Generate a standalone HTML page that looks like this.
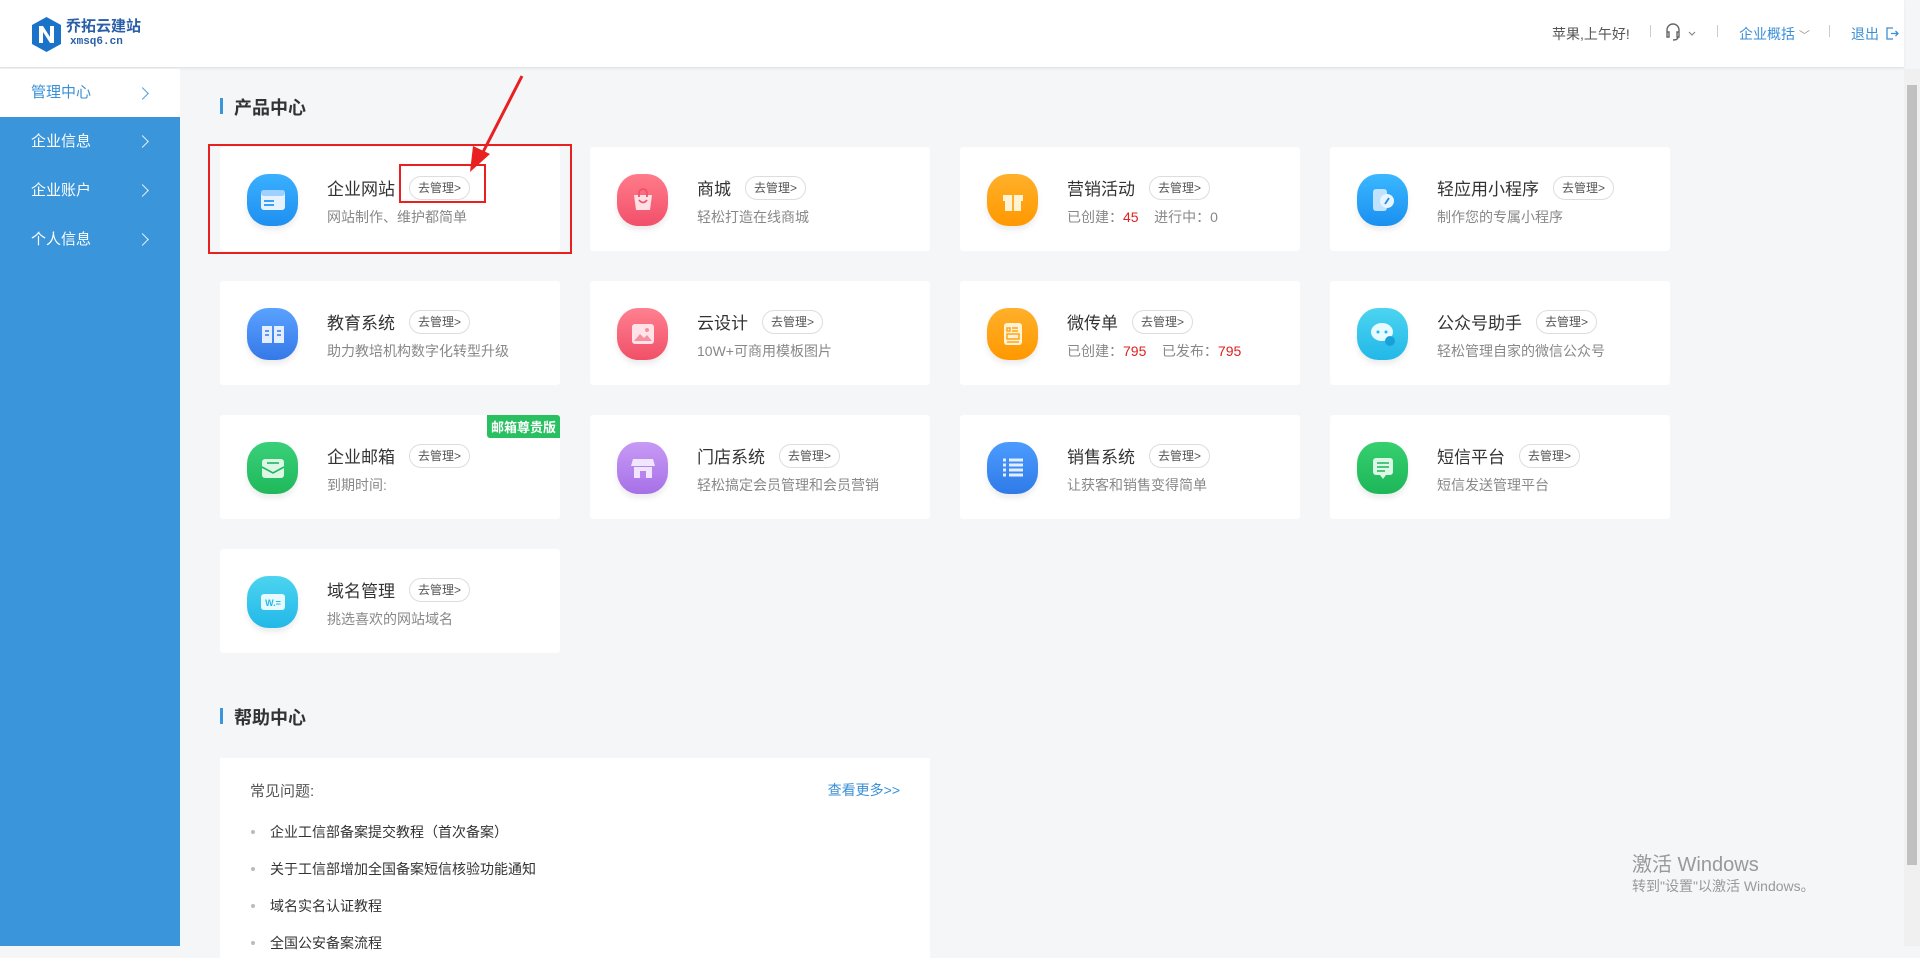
<!DOCTYPE html>
<html><head><meta charset="utf-8">
<style>
*{margin:0;padding:0;box-sizing:border-box}
body{width:1920px;height:946px;overflow:hidden;background:#f5f6f8;font-family:"Liberation Sans","Noto Sans CJK SC",sans-serif;position:relative;color:#333}
.hdr{position:absolute;left:0;top:0;width:1904px;height:68px;background:#fff;border-bottom:1px solid #e2e4e8;box-shadow:0 1px 3px rgba(0,0,0,.06)}
.side{position:absolute;left:0;top:69px;width:180px;height:877px;background:#3a95db}
.side .it{height:49px;line-height:49px;padding-left:31px;color:#fff;font-size:15px;position:relative}
.side .it.on{background:#fff;color:#3a8fd6;height:48px;line-height:48px}
.side .it:after{content:"";position:absolute;left:138px;top:20px;width:8px;height:8px;border-right:1.3px solid currentColor;border-top:1.3px solid currentColor;transform:rotate(45deg);opacity:.85}
.sec{position:absolute;font-size:18px;font-weight:bold;color:#333;padding-left:14px}
.sec:before{content:"";position:absolute;left:0;top:4px;width:3px;height:16px;background:#3a95db}
.card{position:absolute;width:340px;height:104px;background:#fff;border-radius:3px}
.ic{position:absolute;left:27px;top:27px;width:51px;height:52px;border-radius:42%;box-shadow:0 4px 6px rgba(0,0,0,.08)}
.ic svg{position:absolute;left:13px;top:13px}
.t{position:absolute;left:107px;top:28px;font-size:17px;color:#333;white-space:nowrap;display:flex;align-items:center}
.b{display:inline-block;margin-left:14px;height:24px;line-height:22px;padding:0 8px;border:1px solid #ddd;border-radius:12px;font-size:12px;color:#555}
.s{position:absolute;left:107px;top:60px;font-size:14px;color:#888;white-space:nowrap}
.s i{font-style:normal;color:#e02020}
.help{position:absolute;left:220px;top:758px;width:710px;height:200px;background:#fff}
.help li{list-style:none;position:absolute;left:50px;font-size:14px;color:#333}
.help li:before{content:"";position:absolute;left:-19px;top:8px;width:4px;height:4px;border-radius:50%;background:#bbb}
</style></head><body>
<div class="hdr">
  <svg style="position:absolute;left:30px;top:16px" width="33" height="37" viewBox="0 0 33 37"><path d="M16.5 1L31 9v19L16.5 36 2 28V9z" fill="#1a72c9"/><path d="M9 27V10h4l7 11V10h4v17h-4l-7-11v11z" fill="#fff"/></svg>
  <div style="position:absolute;left:66px;top:15px;font-size:15px;font-weight:bold;color:#2a5fa8">乔拓云建站</div>
  <div style="position:absolute;left:70px;top:36px;font-size:11px;font-weight:bold;color:#2a5fa8;font-family:'Liberation Mono',monospace">xmsq6.cn</div>
  <div style="position:absolute;left:1552px;top:24px;font-size:14px;color:#555">苹果,上午好!</div>
  <div style="position:absolute;left:1650px;top:25px;width:1px;height:12px;background:#ccc"></div>
  <svg style="position:absolute;left:1665px;top:22px" width="36" height="20" viewBox="0 0 36 20"><path d="M2 11V8a6 6 0 0 1 12 0v3M2 10h2v5H2zM12 10h2v5h-2zM13 15q0 3-5 3" fill="none" stroke="#666" stroke-width="1.4"/><path d="M24 10l3 3 3-3" fill="none" stroke="#888" stroke-width="1.2"/></svg>
  <div style="position:absolute;left:1717px;top:25px;width:1px;height:12px;background:#ccc"></div>
  <div style="position:absolute;left:1739px;top:24px;font-size:14px;color:#3a8fd6">企业概括 <span style="font-size:11px;color:#999">﹀</span></div>
  <div style="position:absolute;left:1829px;top:25px;width:1px;height:12px;background:#ccc"></div>
  <div style="position:absolute;left:1851px;top:24px;font-size:14px;color:#3a8fd6">退出</div>
  <svg style="position:absolute;left:1886px;top:27px" width="13" height="13" viewBox="0 0 13 13"><path d="M7 1H1v11h6M5 6.5h7M9.5 4l2.5 2.5L9.5 9" fill="none" stroke="#3a8fd6" stroke-width="1.3"/></svg>
</div>
<div style="position:absolute;left:1904px;top:69px;width:16px;height:877px;background:#f0f0f0"><div style="position:absolute;left:3px;top:16px;width:10px;height:780px;background:#c1c1c1"></div></div>
<div class="side">
  <div class="it on">管理中心</div><div class="it">企业信息</div><div class="it">企业账户</div><div class="it">个人信息</div>
</div>
<div class="sec" style="left:220px;top:94px">产品中心</div>

<div class="card" style="left:220px;top:147px"><div class="ic" style="background:linear-gradient(#3ab0ff,#1e8ff0)"><svg width="26" height="26"><rect x="1" y="3" width="24" height="20" rx="3" fill="#e6f3ff"/><rect x="1" y="3" width="24" height="6" rx="3" fill="#9fd0ff"/><rect x="4" y="13" width="10" height="2" fill="#3aa0f5"/><rect x="4" y="17" width="10" height="2" fill="#3aa0f5"/></svg></div><div class="t">企业网站<span class="b">去管理&gt;</span></div><div class="s">网站制作、维护都简单</div></div>
<div class="card" style="left:590px;top:147px"><div class="ic" style="background:linear-gradient(#ff7b8a,#f2506a)"><svg width="26" height="26"><path d="M4 8h18l-2 15H6z" fill="#ffe0e5"/><path d="M9 10V6a4 4 0 0 1 8 0v4M9 13q4 5 8 0" fill="none" stroke="#f2506a" stroke-width="1.8"/></svg></div><div class="t">商城<span class="b">去管理&gt;</span></div><div class="s">轻松打造在线商城</div></div>
<div class="card" style="left:960px;top:147px"><div class="ic" style="background:linear-gradient(#ffb02a,#ff9800)"><svg width="26" height="26"><rect x="3" y="8" width="20" height="6" fill="#fff3d6"/><rect x="5" y="14" width="16" height="10" fill="#fff3d6"/><rect x="12" y="8" width="2" height="16" fill="#ffb02a"/></svg></div><div class="t">营销活动<span class="b">去管理&gt;</span></div><div class="s">已创建：<i>45</i>&nbsp;&nbsp;&nbsp;&nbsp;进行中：0</div></div>
<div class="card" style="left:1330px;top:147px"><div class="ic" style="background:linear-gradient(#3ab8ff,#1a8ff0)"><svg width="26" height="26"><rect x="3" y="2" width="14" height="22" rx="3" fill="#bfe2ff"/><circle cx="17" cy="14" r="7" fill="#e8f5ff"/><path d="M15 17l4-6" stroke="#1a8ff0" stroke-width="1.8"/></svg></div><div class="t">轻应用小程序<span class="b">去管理&gt;</span></div><div class="s">制作您的专属小程序</div></div>

<div class="card" style="left:220px;top:281px"><div class="ic" style="background:linear-gradient(#5aa2ff,#3578e8)"><svg width="26" height="26"><path d="M2 5h10v17H2zM14 5h10v17H14z" fill="#e3eeff"/><path d="M5 10h4M5 14h4M17 10h4M17 14h4" stroke="#3578e8" stroke-width="1.6"/></svg></div><div class="t">教育系统<span class="b">去管理&gt;</span></div><div class="s">助力教培机构数字化转型升级</div></div>
<div class="card" style="left:590px;top:281px"><div class="ic" style="background:linear-gradient(#ff8090,#f05068)"><svg width="26" height="26"><rect x="2" y="3" width="22" height="20" rx="3" fill="#ffe3e8"/><path d="M4 20l6-7 4 4 3-3 5 6z" fill="#f7909e"/><circle cx="17" cy="9" r="2" fill="#f7909e"/></svg></div><div class="t">云设计<span class="b">去管理&gt;</span></div><div class="s">10W+可商用模板图片</div></div>
<div class="card" style="left:960px;top:281px"><div class="ic" style="background:linear-gradient(#ffb02a,#ff9800)"><svg width="26" height="26"><rect x="4" y="2" width="18" height="22" rx="3" fill="#fff3d6"/><path d="M7 7h3v3H7zM12 7h6M12 10h6M7 13h12v5H7zM7 21h12" stroke="#ffa516" stroke-width="1.5" fill="none"/></svg></div><div class="t">微传单<span class="b">去管理&gt;</span></div><div class="s">已创建：<i>795</i>&nbsp;&nbsp;&nbsp;&nbsp;已发布：<i>795</i></div></div>
<div class="card" style="left:1330px;top:281px"><div class="ic" style="background:linear-gradient(#4cd4f0,#22b8e8)"><svg width="26" height="26"><ellipse cx="12" cy="11" rx="11" ry="9" fill="#e6faff"/><circle cx="8" cy="11" r="1.5" fill="#22b8e8"/><circle cx="16" cy="11" r="1.5" fill="#22b8e8"/><circle cx="20" cy="20" r="5" fill="#1aa0d8"/></svg></div><div class="t">公众号助手<span class="b">去管理&gt;</span></div><div class="s">轻松管理自家的微信公众号</div></div>

<div class="card" style="left:220px;top:415px"><div style="position:absolute;right:0;top:0;background:#28c060;color:#fff;font-size:13px;font-weight:bold;padding:2px 4px;border-radius:0 3px 0 3px">邮箱尊贵版</div><div class="ic" style="background:linear-gradient(#3ad07a,#1fb85a)"><svg width="26" height="26"><rect x="2" y="4" width="22" height="19" rx="3" fill="#dcf7e6"/><path d="M2 12l11 6 11-6" fill="none" stroke="#1fb85a" stroke-width="1.6"/><path d="M7 8h12" stroke="#1fb85a" stroke-width="1.6"/></svg></div><div class="t">企业邮箱<span class="b">去管理&gt;</span></div><div class="s">到期时间:</div></div>
<div class="card" style="left:590px;top:415px"><div class="ic" style="background:linear-gradient(#c79af5,#a770e8)"><svg width="26" height="26"><path d="M3 4h20l2 7H1z" fill="#f1e6ff"/><rect x="4" y="12" width="18" height="11" fill="#f1e6ff"/><rect x="10" y="16" width="6" height="7" fill="#b884ee"/></svg></div><div class="t">门店系统<span class="b">去管理&gt;</span></div><div class="s">轻松搞定会员管理和会员营销</div></div>
<div class="card" style="left:960px;top:415px"><div class="ic" style="background:linear-gradient(#4c9cff,#2f7ae8)"><svg width="26" height="26"><path d="M3 5h3M3 10h3M3 15h3M3 20h3M9 5h14M9 10h14M9 15h14M9 20h14" stroke="#e3eeff" stroke-width="3"/></svg></div><div class="t">销售系统<span class="b">去管理&gt;</span></div><div class="s">让获客和销售变得简单</div></div>
<div class="card" style="left:1330px;top:415px"><div class="ic" style="background:linear-gradient(#36d070,#1db658)"><svg width="26" height="26"><rect x="3" y="3" width="20" height="17" rx="3" fill="#dcf7e6"/><path d="M10 20l3 4 3-4z" fill="#dcf7e6"/><path d="M7 8h12M7 12h12M7 16h8" stroke="#1db658" stroke-width="1.6"/></svg></div><div class="t">短信平台<span class="b">去管理&gt;</span></div><div class="s">短信发送管理平台</div></div>

<div class="card" style="left:220px;top:549px"><div class="ic" style="background:linear-gradient(#4cd4f0,#22b8e8)"><svg width="26" height="26"><rect x="1" y="5" width="24" height="16" rx="3" fill="#e6faff"/><text x="13" y="17" text-anchor="middle" font-size="9" font-weight="bold" fill="#22b8e8" font-family="Liberation Sans">W.=</text></svg></div><div class="t">域名管理<span class="b">去管理&gt;</span></div><div class="s">挑选喜欢的网站域名</div></div>

<div class="sec" style="left:220px;top:704px">帮助中心</div>
<div class="help">
  <div style="position:absolute;left:30px;top:22px;font-size:15px;color:#555">常见问题:</div>
  <div style="position:absolute;right:30px;top:22px;font-size:14px;color:#3a8fd6">查看更多&gt;&gt;</div>
  <li style="top:64px">企业工信部备案提交教程（首次备案）</li>
  <li style="top:101px">关于工信部增加全国备案短信核验功能通知</li>
  <li style="top:138px">域名实名认证教程</li>
  <li style="top:175px">全国公安备案流程</li>
</div>

<div style="position:absolute;left:208px;top:144px;width:364px;height:110px;border:2px solid #e82020"></div>
<div style="position:absolute;left:399px;top:164px;width:87px;height:39px;border:2px solid #e82020"></div>
<svg style="position:absolute;left:440px;top:70px" width="100" height="110"><path d="M82 6L40 88" stroke="#e82020" stroke-width="3"/><path d="M30 102L33 76 50 84z" fill="#e82020"/></svg>

<div style="position:absolute;left:1632px;top:848px;font-size:20px;color:#999">激活 Windows</div>
<div style="position:absolute;left:1632px;top:876px;font-size:14px;color:#999">转到"设置"以激活 Windows。</div>
</body></html>
